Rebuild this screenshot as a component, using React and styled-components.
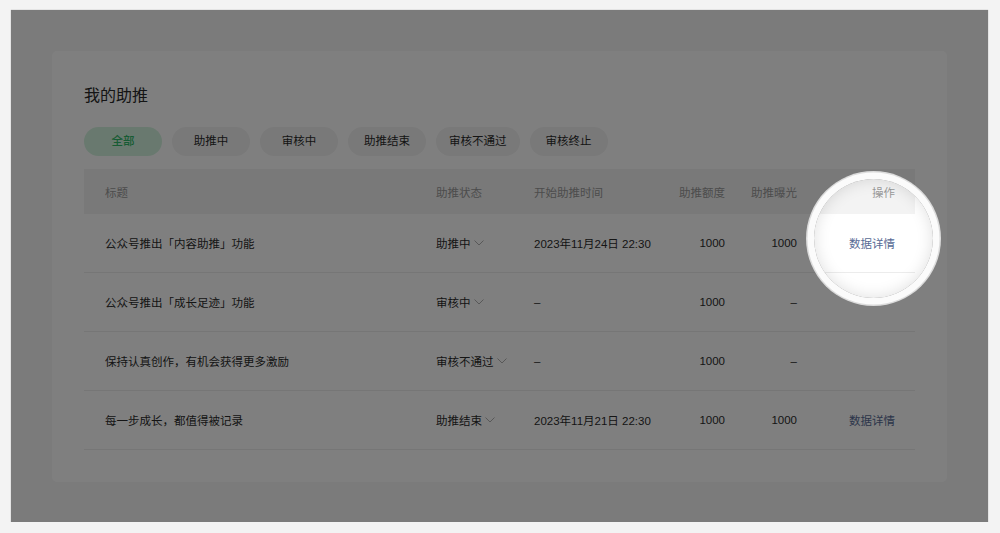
import React from "react";
import styled, { createGlobalStyle } from "styled-components";

const Global = createGlobalStyle`
  html, body { margin: 0; padding: 0; background: #f3f3f3; }
  body {
    font-family: "Liberation Sans", "Noto Sans CJK SC", sans-serif;
    color: #2b2b2b;
    -webkit-font-smoothing: antialiased;
  }
  * { box-sizing: border-box; }
`;

const Frame = styled.div`
  position: relative;
  margin: 10px 0 0 11px;
  width: 977px;
  height: 512px;
  padding: 41px;
  background: #f6f6f7;
  overflow: hidden;
  box-shadow: 0 0 1px rgba(0, 0, 0, 0.35);
`;

const Card = styled.div`
  width: 895px;
  height: 431px;
  background: #ffffff;
  border-radius: 5px;
  padding: 33px 32px;
  display: flex;
  flex-direction: column;
`;

const Title = styled.h1`
  margin: 0;
  font-size: 16px;
  line-height: 24px;
  font-weight: 400;
  color: #2a2a2a;
`;

const Tabs = styled.div`
  display: flex;
  gap: 10px;
  margin-top: 19px;
`;

const Tab = styled.div`
  height: 29px;
  line-height: 29px;
  min-width: 78px;
  padding: 0 13px;
  border-radius: 15px;
  text-align: center;
  font-size: 11.5px;
  background: ${(p) => (p.$active ? "#d3f3df" : "#f2f2f2")};
  color: ${(p) => (p.$active ? "#2fb868" : "#2b2b2b")};
  font-weight: ${(p) => (p.$active ? 500 : 400)};
`;

const Table = styled.div`
  margin-top: 13px;
  width: 831px;
`;

const cols = "332px 98px 136px 95px 72px 98px";

const HeadRow = styled.div`
  display: grid;
  grid-template-columns: ${cols};
  height: 45px;
  align-items: center;
  background: #f3f3f3;
  color: #999;
  font-size: 11.5px;
`;

const Row = styled.div`
  display: grid;
  grid-template-columns: ${cols};
  height: 59px;
  align-items: center;
  border-bottom: 1px solid #ececec;
  font-size: 11.5px;
  color: #2b2b2b;
`;

const Cell = styled.div`
  padding: ${(p) =>
    p.$align === "right" ? "0 20px 0 0" : p.$first ? "0 0 0 21px" : "0 0 0 20px"};
  text-align: ${(p) => (p.$align === "right" ? "right" : "left")};
  white-space: nowrap;
`;

const Status = styled.span`
  display: inline-flex;
  align-items: center;
  gap: 3px;
`;

const Link = styled.span`
  color: #576b95;
`;

const Spotlight = styled.div`
  position: absolute;
  left: 803px;
  top: 169px;
  width: 119px;
  height: 119px;
  border-radius: 50%;
  pointer-events: none;
  box-shadow: inset 0 0 16px rgba(0, 0, 0, 0.13), 0 0 0 6.5px #fbfbfb,
    0 0 0 8px rgba(226, 226, 226, 0.95), 0 0 0 2000px rgba(0, 0, 0, 0.5);
`;

const Chevron = () => (
  <svg width="10" height="6" viewBox="0 0 10 6">
    <polyline points="0.5,0.5 5,5 9.5,0.5" fill="none" stroke="#b0b0b0" strokeWidth="1" />
  </svg>
);

const tabs = ["全部", "助推中", "审核中", "助推结束", "审核不通过", "审核终止"];

const rows = [
  { title: "公众号推出「内容助推」功能", status: "助推中", time: "2023年11月24日 22:30", quota: "1000", exp: "1000", op: true },
  { title: "公众号推出「成长足迹」功能", status: "审核中", time: "–", quota: "1000", exp: "–", op: false },
  { title: "保持认真创作，有机会获得更多激励", status: "审核不通过", time: "–", quota: "1000", exp: "–", op: false },
  { title: "每一步成长，都值得被记录", status: "助推结束", time: "2023年11月21日 22:30", quota: "1000", exp: "1000", op: true },
];

export default function App() {
  return (
    <>
      <Global />
      <Frame>
        <Card>
          <Title>我的助推</Title>
          <Tabs>
            {tabs.map((t, i) => (
              <Tab key={t} $active={i === 0}>
                {t}
              </Tab>
            ))}
          </Tabs>
          <Table>
            <HeadRow>
              <Cell $first>标题</Cell>
              <Cell>助推状态</Cell>
              <Cell>开始助推时间</Cell>
              <Cell $align="right">助推额度</Cell>
              <Cell $align="right">助推曝光</Cell>
              <Cell $align="right">操作</Cell>
            </HeadRow>
            {rows.map((r) => (
              <Row key={r.title}>
                <Cell $first>{r.title}</Cell>
                <Cell>
                  <Status>
                    {r.status}
                    <Chevron />
                  </Status>
                </Cell>
                <Cell>{r.time}</Cell>
                <Cell $align="right">{r.quota}</Cell>
                <Cell $align="right">{r.exp}</Cell>
                <Cell $align="right">{r.op ? <Link>数据详情</Link> : null}</Cell>
              </Row>
            ))}
          </Table>
        </Card>
        <Spotlight />
      </Frame>
    </>
  );
}
